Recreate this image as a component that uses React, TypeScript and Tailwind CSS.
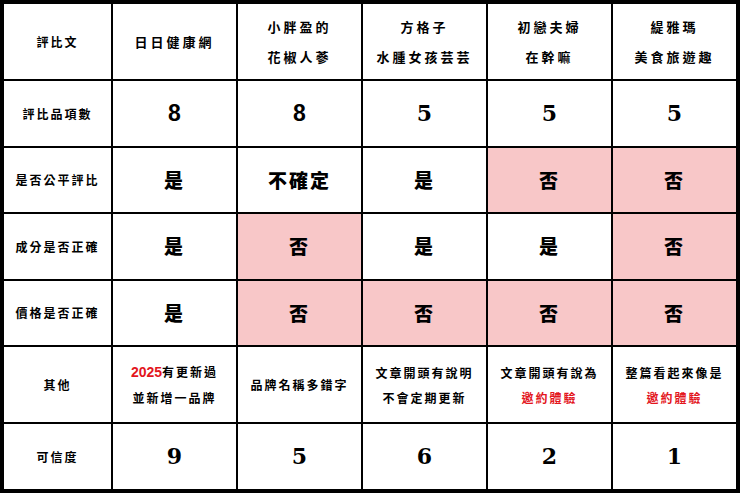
import React from "react";

const cjk = "font-['Noto_Sans_CJK_TC','Noto_Sans_CJK_SC',sans-serif]";
const PINK = "bg-[#f8c7c8]";

type Cell = { content: React.ReactNode; pink?: boolean };

const Head = ({ children }: { children: React.ReactNode }) => (
  <div className={`${cjk} text-[13px] font-bold tracking-[3px] leading-[30px] text-center text-black`}>{children}</div>
);

const Label = ({ children }: { children: React.ReactNode }) => (
  <div className={`${cjk} text-[12px] font-bold tracking-[2px] text-center text-black`}>{children}</div>
);

const Big = ({ children }: { children: React.ReactNode }) => (
  <div className={`${cjk} text-[19px] font-black tracking-[2px] text-center text-black`}>{children}</div>
);

const NumSans = ({ children }: { children: React.ReactNode }) => (
  <div className="font-['Liberation_Sans',sans-serif] text-[23px] font-bold text-black">{children}</div>
);

const NumSerif = ({ children }: { children: React.ReactNode }) => (
  <div className="font-['DejaVu_Serif',serif] text-[22px] font-bold text-black">{children}</div>
);

const Note = ({ children }: { children: React.ReactNode }) => (
  <div className={`${cjk} text-[12px] font-bold tracking-[2px] leading-[25px] text-center text-black`}>{children}</div>
);

const Red = ({ children }: { children: React.ReactNode }) => (
  <span className="text-[#e3161d]">{children}</span>
);

const rows: Cell[][] = [
  [
    { content: <Label>評比文</Label> },
    { content: <Head>日日健康網</Head> },
    { content: <Head>小胖盈的<br />花椒人蔘</Head> },
    { content: <Head>方格子<br />水腫女孩芸芸</Head> },
    { content: <Head>初戀夫婦<br />在幹嘛</Head> },
    { content: <Head>緹雅瑪<br />美食旅遊趣</Head> },
  ],
  [
    { content: <Label>評比品項數</Label> },
    { content: <NumSans>8</NumSans> },
    { content: <NumSans>8</NumSans> },
    { content: <NumSerif>5</NumSerif> },
    { content: <NumSerif>5</NumSerif> },
    { content: <NumSerif>5</NumSerif> },
  ],
  [
    { content: <Label>是否公平評比</Label> },
    { content: <Big>是</Big> },
    { content: <Big>不確定</Big> },
    { content: <Big>是</Big> },
    { content: <Big>否</Big>, pink: true },
    { content: <Big>否</Big>, pink: true },
  ],
  [
    { content: <Label>成分是否正確</Label> },
    { content: <Big>是</Big> },
    { content: <Big>否</Big>, pink: true },
    { content: <Big>是</Big> },
    { content: <Big>是</Big> },
    { content: <Big>否</Big>, pink: true },
  ],
  [
    { content: <Label>價格是否正確</Label> },
    { content: <Big>是</Big> },
    { content: <Big>否</Big>, pink: true },
    { content: <Big>否</Big>, pink: true },
    { content: <Big>否</Big>, pink: true },
    { content: <Big>否</Big>, pink: true },
  ],
  [
    { content: <Label>其他</Label> },
    {
      content: (
        <Note>
          <Red><span className="font-['Liberation_Sans',sans-serif] tracking-[0px] text-[14px]">2025</span></Red>有更新過<br />並新增一品牌
        </Note>
      ),
    },
    { content: <Note>品牌名稱多錯字</Note> },
    { content: <Note>文章開頭有說明<br />不會定期更新</Note> },
    { content: <Note>文章開頭有說為<br /><Red>邀約體驗</Red></Note> },
    { content: <Note>整篇看起來像是<br /><Red>邀約體驗</Red></Note> },
  ],
  [
    { content: <Label>可信度</Label> },
    { content: <NumSerif>9</NumSerif> },
    { content: <NumSerif>5</NumSerif> },
    { content: <NumSerif>6</NumSerif> },
    { content: <NumSerif>2</NumSerif> },
    { content: <NumSerif>1</NumSerif> },
  ],
];

export default function App() {
  return (
    <div className="w-[740px] h-[493px] bg-black p-[4px]">
      <div className="grid h-full w-full gap-[2px] grid-cols-[107px_123px_123px_123px_123px_123px] grid-rows-[75px_65px_64px_65px_64px_75px_65px]">
        {rows.flatMap((row, ri) =>
          row.map((cell, ci) => (
            <div
              key={`${ri}-${ci}`}
              className={`flex items-center justify-center ${cell.pink ? PINK : "bg-white"}`}
            >
              {cell.content}
            </div>
          ))
        )}
      </div>
    </div>
  );
}
